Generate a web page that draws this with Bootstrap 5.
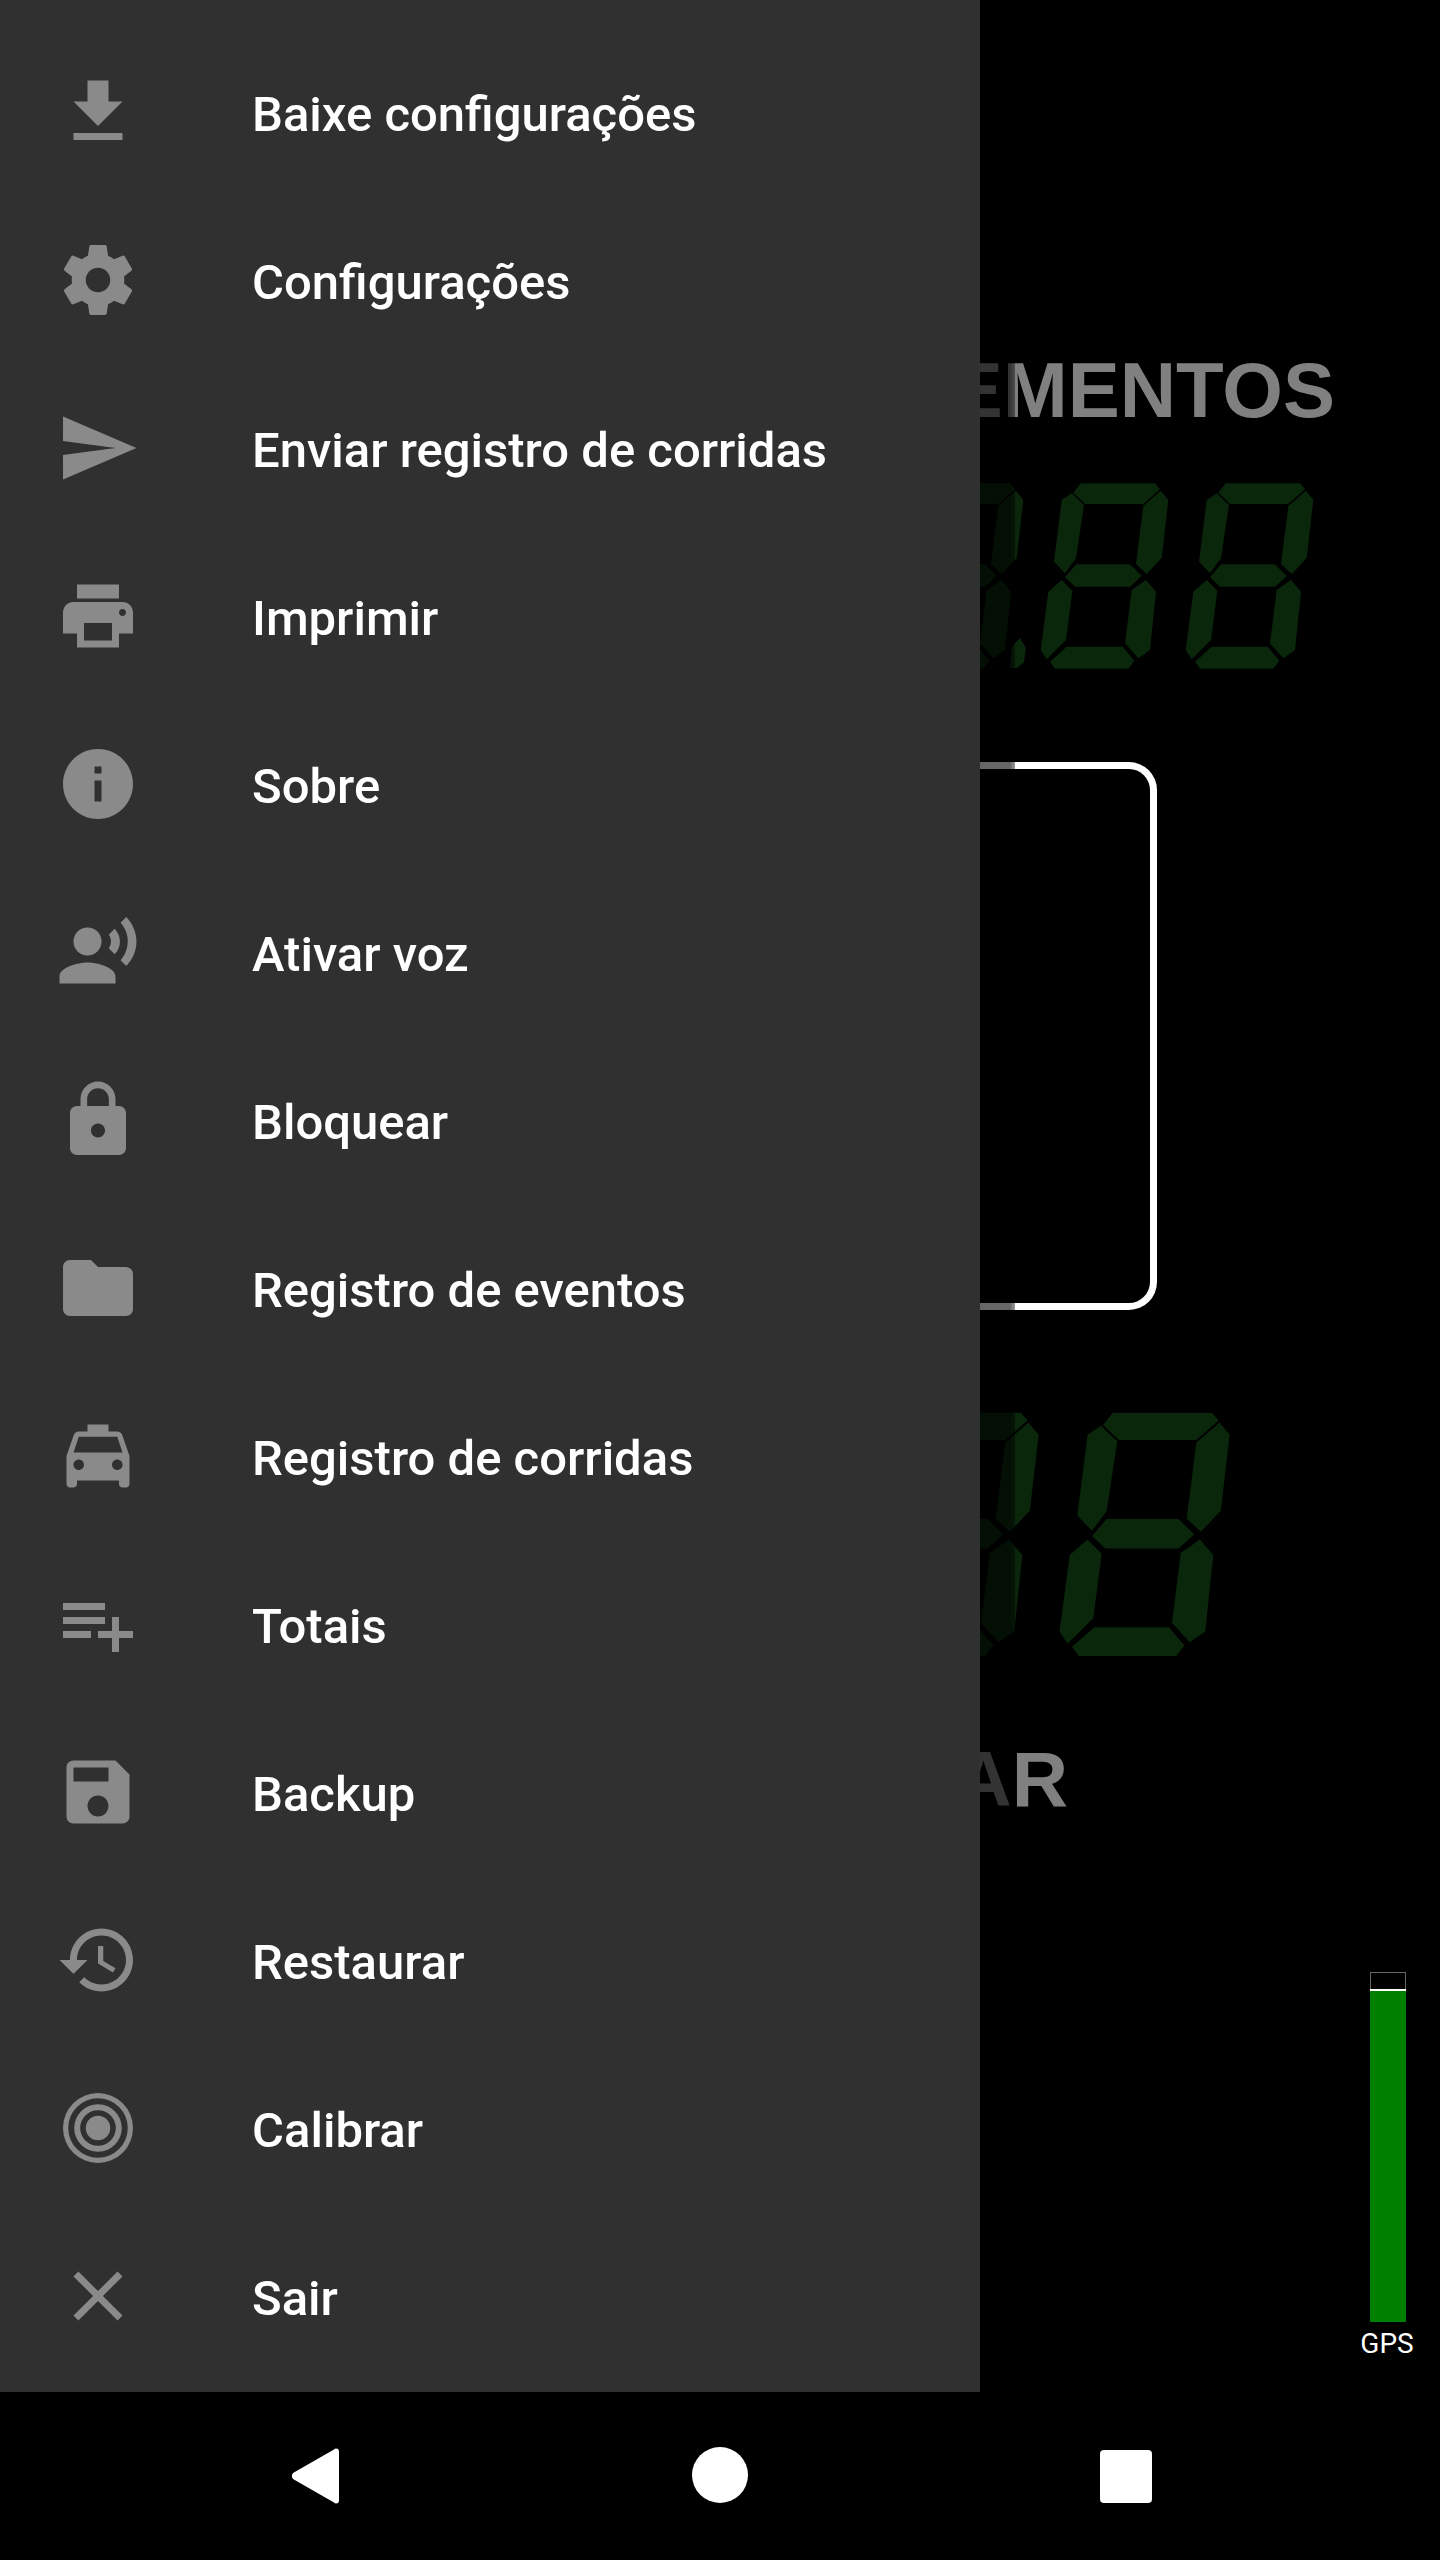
<!DOCTYPE html>
<html lang="pt">
<head>
<meta charset="utf-8">
<title>Taxímetro</title>
<link href="https://cdn.jsdelivr.net/npm/bootstrap@5.3.0/dist/css/bootstrap.min.css" rel="stylesheet">
<style>
html,body{margin:0;background:#000;font-family:Roboto,"Liberation Sans",sans-serif}
.phone{width:1440px;height:2560px;overflow:hidden}
.stage{height:2392px;background:#000}
.drawer{width:980px;height:2392px;background:#303030;padding-top:30px;z-index:3}
.drawer::after{content:"";position:absolute;left:980px;top:0;width:35px;height:100%;background:linear-gradient(90deg,rgba(0,0,0,.6) 85%,rgba(0,0,0,.4) 100%)}
.menu-row{height:168px;padding-left:56px;color:#fff;font-weight:500;font-size:49px;line-height:1}
.menu-ico{width:84px;height:84px;margin-right:112px;margin-top:-5px;fill:#8a8a8a;flex:none}
.meter{padding-left:980px;overflow:hidden;height:100%}
.big-word{font-family:"Liberation Sans",Arial,sans-serif;font-weight:700;font-size:78px;line-height:1;color:#808080;white-space:nowrap}
.word-top{margin-top:351px;padding-right:105px}
.word-low{margin-top:84px;padding-right:372px}
.digits{display:block;fill:#0a260b;margin-left:-980px;flex:none}
.digits-top{margin-top:54px;width:1440px;height:186px}
.digits-low{margin-top:102px;width:1440px;height:244px}
.screen-box{height:548px;flex:none;margin-top:93px;margin-left:-300px;margin-right:283px;border:7px solid #fff;border-radius:0 28px 28px 0;border-left:0}
.gps-col{width:60px;margin-left:auto;margin-right:22px;margin-top:154px}
.gps-track{width:36px;height:350px;border:1px solid #666;border-bottom:0}
.gps-fill{height:333px;margin:16px -1px 0;background:#008000;border-top:2px solid #fff}
.gps-label{font-size:28px;line-height:1;color:#fff;margin-top:8px;margin-right:2px;text-align:center}
.navi{height:168px;background:#000;fill:#fff}
.navi-back{left:291px;top:56px}
.navi-home{left:692px;top:55px;width:56px;height:56px}
.navi-rect{left:1100px;top:58px;width:52px;height:53px}
</style>
</head>
<body>
<div class="phone">
  <div class="stage position-relative">
    <nav class="drawer position-absolute top-0 start-0 d-flex flex-column">
      <div class="menu-row d-flex align-items-center"><svg class="menu-ico" viewBox="0 0 24 24"><path d="M19 9h-4V3H9v6H5l7 7 7-7zM5 18v2h14v-2H5z"/></svg><span>Baixe configurações</span></div>
      <div class="menu-row d-flex align-items-center"><svg class="menu-ico" viewBox="0 0 24 24"><path d="M19.43 12.98c.04-.32.07-.64.07-.98s-.03-.66-.07-.98l2.11-1.65c.19-.15.24-.42.12-.64l-2-3.46c-.12-.22-.39-.3-.61-.22l-2.49 1c-.52-.4-1.08-.73-1.69-.98l-.38-2.65C14.46 2.18 14.25 2 14 2h-4c-.25 0-.46.18-.49.42l-.38 2.65c-.61.25-1.17.59-1.69.98l-2.49-1c-.23-.09-.49 0-.61.22l-2 3.46c-.13.22-.07.49.12.64l2.11 1.65c-.04.32-.07.65-.07.98s.03.66.07.98l-2.11 1.65c-.19.15-.24.42-.12.64l2 3.46c.12.22.39.3.61.22l2.49-1c.52.4 1.08.73 1.69.98l.38 2.65c.03.24.24.42.49.42h4c.25 0 .46-.18.49-.42l.38-2.65c.61-.25 1.17-.59 1.69-.98l2.49 1c.23.09.49 0 .61-.22l2-3.46c.12-.22.07-.49-.12-.64l-2.11-1.65zM12 15.5c-1.93 0-3.5-1.57-3.5-3.5s1.57-3.5 3.5-3.5 3.5 1.57 3.5 3.5-1.57 3.5-3.5 3.5z"/></svg><span>Configurações</span></div>
      <div class="menu-row d-flex align-items-center"><svg class="menu-ico" viewBox="0 0 24 24"><path d="M2.01 21L23 12 2.01 3 2 10l15 2-15 2z"/></svg><span>Enviar registro de corridas</span></div>
      <div class="menu-row d-flex align-items-center"><svg class="menu-ico" viewBox="0 0 24 24"><path d="M19 8H5c-1.66 0-3 1.34-3 3v6h4v4h12v-4h4v-6c0-1.66-1.34-3-3-3zm-3 11H8v-5h8v5zm3-7c-.55 0-1-.45-1-1s.45-1 1-1 1 .45 1 1-.45 1-1 1zm-1-9H6v4h12V3z"/></svg><span>Imprimir</span></div>
      <div class="menu-row d-flex align-items-center"><svg class="menu-ico" viewBox="0 0 24 24"><path d="M12 2C6.48 2 2 6.48 2 12s4.48 10 10 10 10-4.48 10-10S17.52 2 12 2zm1 15h-2v-6h2v6zm0-8h-2V7h2v2z"/></svg><span>Sobre</span></div>
      <div class="menu-row d-flex align-items-center"><svg class="menu-ico" viewBox="0 0 24 24"><circle cx="9" cy="9" r="4"/><path d="M9 15c-2.67 0-8 1.34-8 4v2h16v-2c0-2.66-5.33-4-8-4zm7.76-9.64l-1.68 1.69c.84 1.18.84 2.71 0 3.89l1.68 1.69c2.02-2.02 2.02-5.07 0-7.27zM20.07 2l-1.63 1.63c2.77 3.02 2.77 7.56 0 10.74L20.07 16c3.9-3.89 3.91-9.95 0-14z"/></svg><span>Ativar voz</span></div>
      <div class="menu-row d-flex align-items-center"><svg class="menu-ico" viewBox="0 0 24 24"><path d="M18 8h-1V6c0-2.76-2.24-5-5-5S7 3.24 7 6v2H6c-1.1 0-2 .9-2 2v10c0 1.1.9 2 2 2h12c1.1 0 2-.9 2-2V10c0-1.1-.9-2-2-2zm-6 9c-1.1 0-2-.9-2-2s.9-2 2-2 2 .9 2 2-.9 2-2 2zm3.1-9H8.9V6c0-1.71 1.39-3.1 3.1-3.1 1.71 0 3.1 1.39 3.1 3.1v2z"/></svg><span>Bloquear</span></div>
      <div class="menu-row d-flex align-items-center"><svg class="menu-ico" viewBox="0 0 24 24"><path d="M10 4H4c-1.1 0-1.99.9-1.99 2L2 18c0 1.1.9 2 2 2h16c1.1 0 2-.9 2-2V8c0-1.1-.9-2-2-2h-8l-2-2z"/></svg><span>Registro de eventos</span></div>
      <div class="menu-row d-flex align-items-center"><svg class="menu-ico" viewBox="0 0 24 24"><path d="M18.92 6.01C18.72 5.42 18.16 5 17.5 5H15V3H9v2H6.5c-.66 0-1.21.42-1.42 1.01L3 12v8c0 .55.45 1 1 1h1c.55 0 1-.45 1-1v-1h12v1c0 .55.45 1 1 1h1c.55 0 1-.45 1-1v-8l-2.08-5.99zM6.5 16c-.83 0-1.5-.67-1.5-1.5S5.67 13 6.5 13s1.5.67 1.5 1.5S7.33 16 6.5 16zm11 0c-.83 0-1.5-.67-1.5-1.5s.67-1.5 1.5-1.5 1.5.67 1.5 1.5-.67 1.5-1.5 1.5zM5 11l1.5-4.5h11L19 11H5z"/></svg><span>Registro de corridas</span></div>
      <div class="menu-row d-flex align-items-center"><svg class="menu-ico" viewBox="0 0 24 24"><path d="M14 10H2v2h12v-2zm0-4H2v2h12V6zm4 8v-4h-2v4h-4v2h4v4h2v-4h4v-2h-4zM2 16h8v-2H2v2z"/></svg><span>Totais</span></div>
      <div class="menu-row d-flex align-items-center"><svg class="menu-ico" viewBox="0 0 24 24"><path d="M17 3H5c-1.11 0-2 .9-2 2v14c0 1.1.89 2 2 2h14c1.1 0 2-.9 2-2V7l-4-4zm-5 16c-1.66 0-3-1.34-3-3s1.34-3 3-3 3 1.34 3 3-1.34 3-3 3zm3-10H5V5h10v4z"/></svg><span>Backup</span></div>
      <div class="menu-row d-flex align-items-center"><svg class="menu-ico" viewBox="0 0 24 24"><path d="M13 3c-4.97 0-9 4.03-9 9H1l3.89 3.89.07.14L9 12H6c0-3.87 3.13-7 7-7s7 3.13 7 7-3.13 7-7 7c-1.93 0-3.68-.79-4.94-2.06l-1.42 1.42C8.27 19.99 10.51 21 13 21c4.97 0 9-4.03 9-9s-4.03-9-9-9zm-1 5v5l4.28 2.54.72-1.21-3.5-2.08V8H12z"/></svg><span>Restaurar</span></div>
      <div class="menu-row d-flex align-items-center"><svg class="menu-ico" viewBox="0 0 24 24"><path fill-rule="evenodd" d="M12 2a10 10 0 1 0 0 20 10 10 0 1 0 0-20zM12 3.500a8.500 8.500 0 1 0 0 17 8.500 8.500 0 1 0 0-17zM12 5.200a6.800 6.800 0 1 0 0 13.600 6.800 6.800 0 1 0 0-13.600zM12 6.900a5.100 5.100 0 1 0 0 10.200 5.100 5.100 0 1 0 0-10.200zM12 8.500a3.500 3.500 0 1 0 0 7 3.500 3.500 0 1 0 0-7z"/></svg><span>Calibrar</span></div>
      <div class="menu-row d-flex align-items-center"><svg class="menu-ico" viewBox="0 0 24 24"><path d="M19 6.41L17.59 5 12 10.59 6.41 5 5 6.41 10.59 12 5 17.59 6.41 19 12 13.41 17.59 19 19 17.59 13.41 12z"/></svg><span>Sair</span></div>
    </nav>
    <main class="meter d-flex flex-column">
      <div class="big-word word-top d-flex justify-content-end">EMENTOS</div>
      <svg class="digits digits-top" viewBox="0 483 1440 186">
        <defs>
          <g id="seg8">
            <polygon points="113.300,172.700 120.700,163.300 195,163.300 200,169.300 183.300,184 125,184"/>
            <polygon points="200.700,170.700 208.300,180 201.700,238 186.700,254 176,244 183.300,186"/>
            <polygon points="111.700,173.300 124,185 116,238.300 105,253.300 94,241.700 101.700,180"/>
            <polygon points="116,244.300 170,244.300 181.700,256 170,266.700 115,266.700 105,257.300"/>
            <polygon points="101.700,260 112.300,270.700 106,320 86.700,339.300 80.700,330 88.300,271.700"/>
            <polygon points="186,260 196,271.700 190,330 178.300,338.300 165,323.300 171.700,270"/>
            <polygon points="106.700,326.700 162.700,326.700 174.300,340.700 168.300,348.700 95,348.700 90,341.700"/>
          </g>
        </defs>
        <g transform="translate(1105 320)"><use href="#seg8"/></g>
        <g transform="translate(960 320)"><use href="#seg8"/></g>
        <g transform="translate(815 320)"><use href="#seg8"/></g>
        <polygon points="1012,646 1020,638 1026,648 1024,662 1017,668 1010,668"/>
      </svg>
      <div class="screen-box"></div>
      <svg class="digits digits-low" viewBox="0 1412 1440 244">
        <g transform="translate(952 1198.500) scale(1.333 1.312)"><use href="#seg8"/></g>
        <g transform="translate(761 1198.500) scale(1.333 1.312)"><use href="#seg8"/></g>
      </svg>
      <div class="big-word word-low d-flex justify-content-end">AR</div>
      <div class="gps-col d-flex flex-column align-items-center">
        <div class="gps-track"><div class="gps-fill"></div></div>
        <div class="gps-label">GPS</div>
      </div>
    </main>
  </div>
  <div class="navi position-relative">
    <svg class="navi-back position-absolute" width="48" height="56" viewBox="0 0 48 56"><path d="M45 0.5c1.7 0 3 1.3 3 3v49c0 1.7-1.3 3-3 3-.8 0-1.5-.3-2-.9L2 31c-1.500-1.700-1.500-4.300 0-6L43 1.400c.5-.6 1.200-.9 2-.9z"/></svg>
    <div class="navi-home position-absolute bg-white rounded-circle"></div>
    <div class="navi-rect position-absolute bg-white rounded-1"></div>
  </div>
</div>
<script src="https://cdn.jsdelivr.net/npm/bootstrap@5.3.0/dist/js/bootstrap.bundle.min.js"></script>
</body>
</html>
